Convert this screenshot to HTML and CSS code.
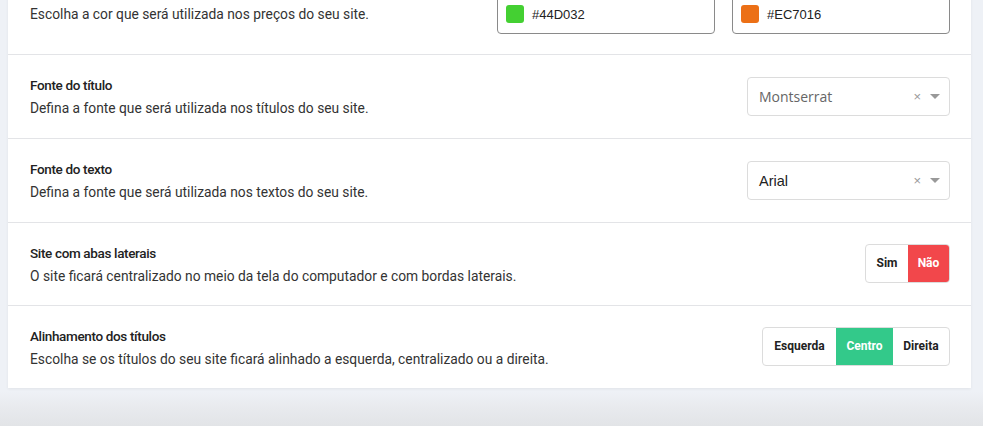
FILE: index.html
```html
<!DOCTYPE html>
<html lang="pt">
<head>
<meta charset="utf-8">
<link rel="stylesheet" href="styles.css">
</head>
<body>
<div class="card">
  <div class="row first">
    <div class="info">
      <div class="desc">Escolha a cor que será utilizada nos preços do seu site.</div>
    </div>
    <div class="colors">
      <div class="colorbox"><span class="swatch green"></span><span>#44D032</span></div>
      <div class="colorbox"><span class="swatch orange"></span><span>#EC7016</span></div>
    </div>
  </div>
  <div class="row">
    <div class="info">
      <div class="title">Fonte do título</div>
      <div class="desc">Defina a fonte que será utilizada nos títulos do seu site.</div>
    </div>
    <div class="select">
      <span class="value muted">Montserrat</span>
      <span class="clear">×</span>
      <span class="arrow"></span>
    </div>
  </div>
  <div class="row">
    <div class="info">
      <div class="title">Fonte do texto</div>
      <div class="desc">Defina a fonte que será utilizada nos textos do seu site.</div>
    </div>
    <div class="select">
      <span class="value arial">Arial</span>
      <span class="clear">×</span>
      <span class="arrow"></span>
    </div>
  </div>
  <div class="row mid">
    <div class="info">
      <div class="title">Site com abas laterais</div>
      <div class="desc">O site ficará centralizado no meio da tela do computador e com bordas laterais.</div>
    </div>
    <div class="btngroup">
      <span class="btn sim">Sim</span>
      <span class="btn nao active-red">Não</span>
    </div>
  </div>
  <div class="row last">
    <div class="info">
      <div class="title">Alinhamento dos títulos</div>
      <div class="desc">Escolha se os títulos do seu site ficará alinhado a esquerda, centralizado ou a direita.</div>
    </div>
    <div class="btngroup">
      <span class="btn esq">Esquerda</span>
      <span class="btn cen active-green">Centro</span>
      <span class="btn dir">Direita</span>
    </div>
  </div>
</div>
</body>
</html>
```

FILE: styles.css
```css
* { box-sizing: border-box; }
html, body { margin: 0; padding: 0; }
body {
  width: 983px;
  height: 426px;
  overflow: hidden;
  background: linear-gradient(to bottom, #eef1f6 0, #eef1f6 392px, #e9ebef 405px, #e2e4e7 426px);
  font-family: Roboto, "Noto Sans", sans-serif;
}
.card {
  margin: -26px 12px 0 8px;
  background: #fff;
  box-shadow: 0 1px 3px rgba(0,0,0,0.06);
}
.row {
  height: 84px;
  display: flex;
  align-items: center;
  justify-content: space-between;
  padding: 0 21px 0 22px;
  border-bottom: 1px solid #e3e4e7;
}
.row.first { height: 81px; }
.row.mid { height: 83px; }
.row.last { border-bottom: none; height: 82px; }
.info { display: flex; flex-direction: column; gap: 7px; }
.title {
  font-size: 13.5px;
  font-weight: 500;
  color: #222;
  letter-spacing: -0.35px;
}
.desc {
  font-size: 13.8px;
  color: #333;
}
.colors { display: flex; gap: 17px; }
.colorbox {
  width: 218px;
  height: 39px;
  border: 1px solid #8a8a8a;
  border-radius: 4px;
  display: flex;
  align-items: center;
  padding-left: 8px;
  gap: 8px;
  font-family: "Liberation Sans", Arial, sans-serif;
  font-size: 13px;
  color: #222;
}
.swatch { width: 18px; height: 18px; border-radius: 3px; display: inline-block; }
.swatch.green { background: #44d032; }
.swatch.orange { background: #ec7016; }
.select {
  width: 203px;
  height: 39px;
  border: 1px solid #dcdcdc;
  border-radius: 4px;
  display: flex;
  align-items: center;
  padding: 0 9px 0 11px;
}
.value {
  flex: 1;
  font-family: "Open Sans", sans-serif;
  font-size: 14px;
  color: #333;
}
.value.muted { color: #666; }
.value.arial { font-family: "Liberation Sans", Arial, sans-serif; font-size: 14.5px; color: #222; }
.clear {
  color: #999;
  font-family: "Liberation Sans", sans-serif;
  font-size: 13px;
  margin-right: 9px;
}
.arrow {
  width: 0; height: 0;
  border-left: 5px solid transparent;
  border-right: 5px solid transparent;
  border-top: 5px solid #999;
}
.btngroup {
  display: flex;
  height: 39px;
  margin-top: -2px;
  border: 1px solid #dcdcdc;
  border-radius: 4px;
  overflow: hidden;
}
.btn {
  display: flex;
  align-items: center;
  justify-content: center;
  font-size: 12px;
  font-weight: 700;
  color: #222;
}
.btn.sim { width: 42px; }
.btn.nao { width: 41px; }
.btn.esq { width: 73px; }
.btn.cen { width: 57px; }
.btn.dir { width: 56px; }
.active-red { background: #f2474b; color: #fff; }
.active-green { background: #33c98a; color: #fff; }
```
